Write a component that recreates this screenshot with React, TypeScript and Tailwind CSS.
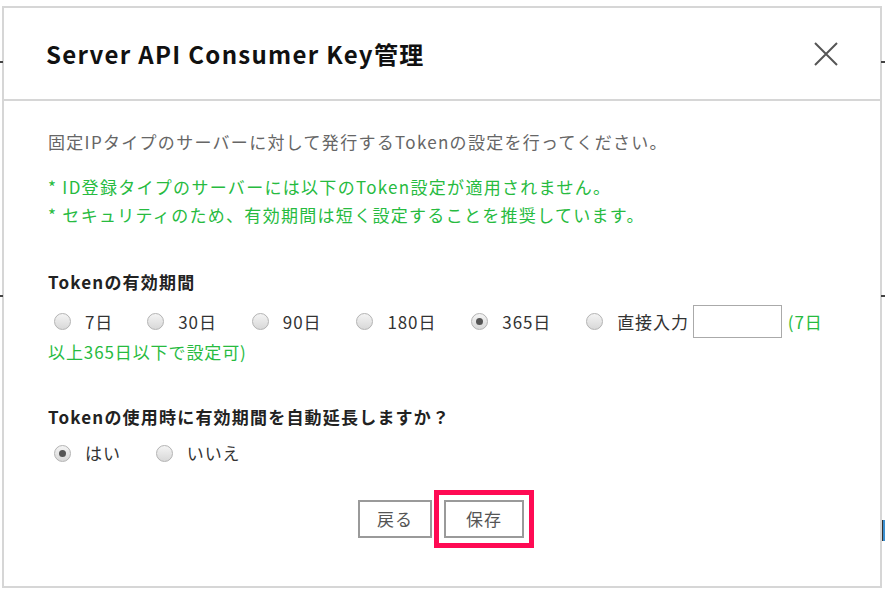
import React from "react";

const font = { fontFamily: '"Noto Sans CJK JP", "Noto Sans", sans-serif' };

function Radio({ label, checked = false }: { label: string; checked?: boolean }) {
  return (
    <label className="flex items-center gap-[14px] cursor-pointer">
      <span className="flex h-[17px] w-[17px] shrink-0 items-center justify-center rounded-full border border-[#b3b3b3] bg-gradient-to-b from-[#f4f4f4] to-[#d8d8d8]">
        {checked && <span className="h-[7px] w-[7px] rounded-full bg-[#555]" />}
      </span>
      <span className="text-[#333]">{label}</span>
    </label>
  );
}

export default function App() {
  return (
    <div className="relative h-[591px] w-[885px] overflow-hidden bg-white" style={font}>
      {/* faint page behind the dialog */}
      <div className="absolute left-0 top-[61px] h-[2px] w-[3px] bg-[#444]" />
      <div className="absolute left-0 top-[295px] h-[2px] w-[3px] bg-[#444]" />
      <div className="absolute right-0 top-[61px] h-[2px] w-[4px] bg-[#444]" />
      <div className="absolute right-0 top-[295px] h-[2px] w-[4px] bg-[#444]" />
      <div className="absolute right-0 top-[520px] h-[21px] w-[3px] border-l border-[#333] bg-[#3a8fd0]" />

      <div className="pl-[2px] pt-[6px]">
        <div className="flex h-[582px] w-[880px] flex-col border-2 border-[#d6d6d6] bg-white">
          <div className="flex h-[93px] shrink-0 items-center justify-between border-b-2 border-[#d6d6d6] pl-[42px] pr-[42px]">
            <h1 className="text-[24px] font-bold tracking-[1.3px] text-[#111]">Server API Consumer Key管理</h1>
            <button className="text-[#555]">
              <svg width="24" height="24" viewBox="0 0 24 24" fill="none" stroke="currentColor" strokeWidth="2">
                <path d="M1 1 L23 23 M23 1 L1 23" />
              </svg>
            </button>
          </div>

          <div className="flex flex-1 flex-col px-[44px] pt-[27px] text-[17px] tracking-[0.9px]">
            <p className="leading-[28px] tracking-[1.3px] text-[#666]">固定IPタイプのサーバーに対して発行するTokenの設定を行ってください。</p>
            <div className="mt-[17px] leading-[28px] tracking-[1.3px] text-[#27bb3f]">
              <p>* ID登録タイプのサーバーには以下のToken設定が適用されません。</p>
              <p>* セキュリティのため、有効期間は短く設定することを推奨しています。</p>
            </div>

            <h2 className="mt-[39px] font-bold leading-[28px] tracking-[1.2px] text-[#222]">Tokenの有効期間</h2>
            <div className="mt-[9px] flex flex-wrap items-center pl-[6px] leading-[33px]">
              <div className="mr-[34px]"><Radio label="7日" /></div>
              <div className="mr-[35px]"><Radio label="30日" /></div>
              <div className="mr-[35px]"><Radio label="90日" /></div>
              <div className="mr-[35px]"><Radio label="180日" /></div>
              <div className="mr-[35px]"><Radio label="365日" checked /></div>
              <Radio label="直接入力" />
              <input className="ml-[4px] h-[33px] w-[89px] border border-[#aaa] outline-none" />
              <span className="ml-[6px] text-[#27bb3f]">(7日</span>
              <span className="-ml-[6px] w-full leading-[28px] text-[#27bb3f]">以上365日以下で設定可)</span>
            </div>

            <h2 className="mt-[37px] font-bold leading-[28px] tracking-[1.2px] text-[#222]">Tokenの使用時に有効期間を自動延長しますか？</h2>
            <div className="mt-[8px] flex items-center gap-[35px] pl-[6px] leading-[28px]">
              <Radio label="はい" checked />
              <Radio label="いいえ" />
            </div>

            <div className="mt-[23px] flex items-center justify-center gap-[2px] pl-[8px]">
              <button className="h-[38px] w-[74px] border-2 border-[#9a9a9a] bg-white text-[#555]">戻る</button>
              <div className="border-[5px] border-[#ff0a54] p-[5px]">
                <button className="h-[38px] w-[80px] border-2 border-[#9a9a9a] bg-white text-[#555]">保存</button>
              </div>
            </div>
          </div>
        </div>
      </div>
    </div>
  );
}
